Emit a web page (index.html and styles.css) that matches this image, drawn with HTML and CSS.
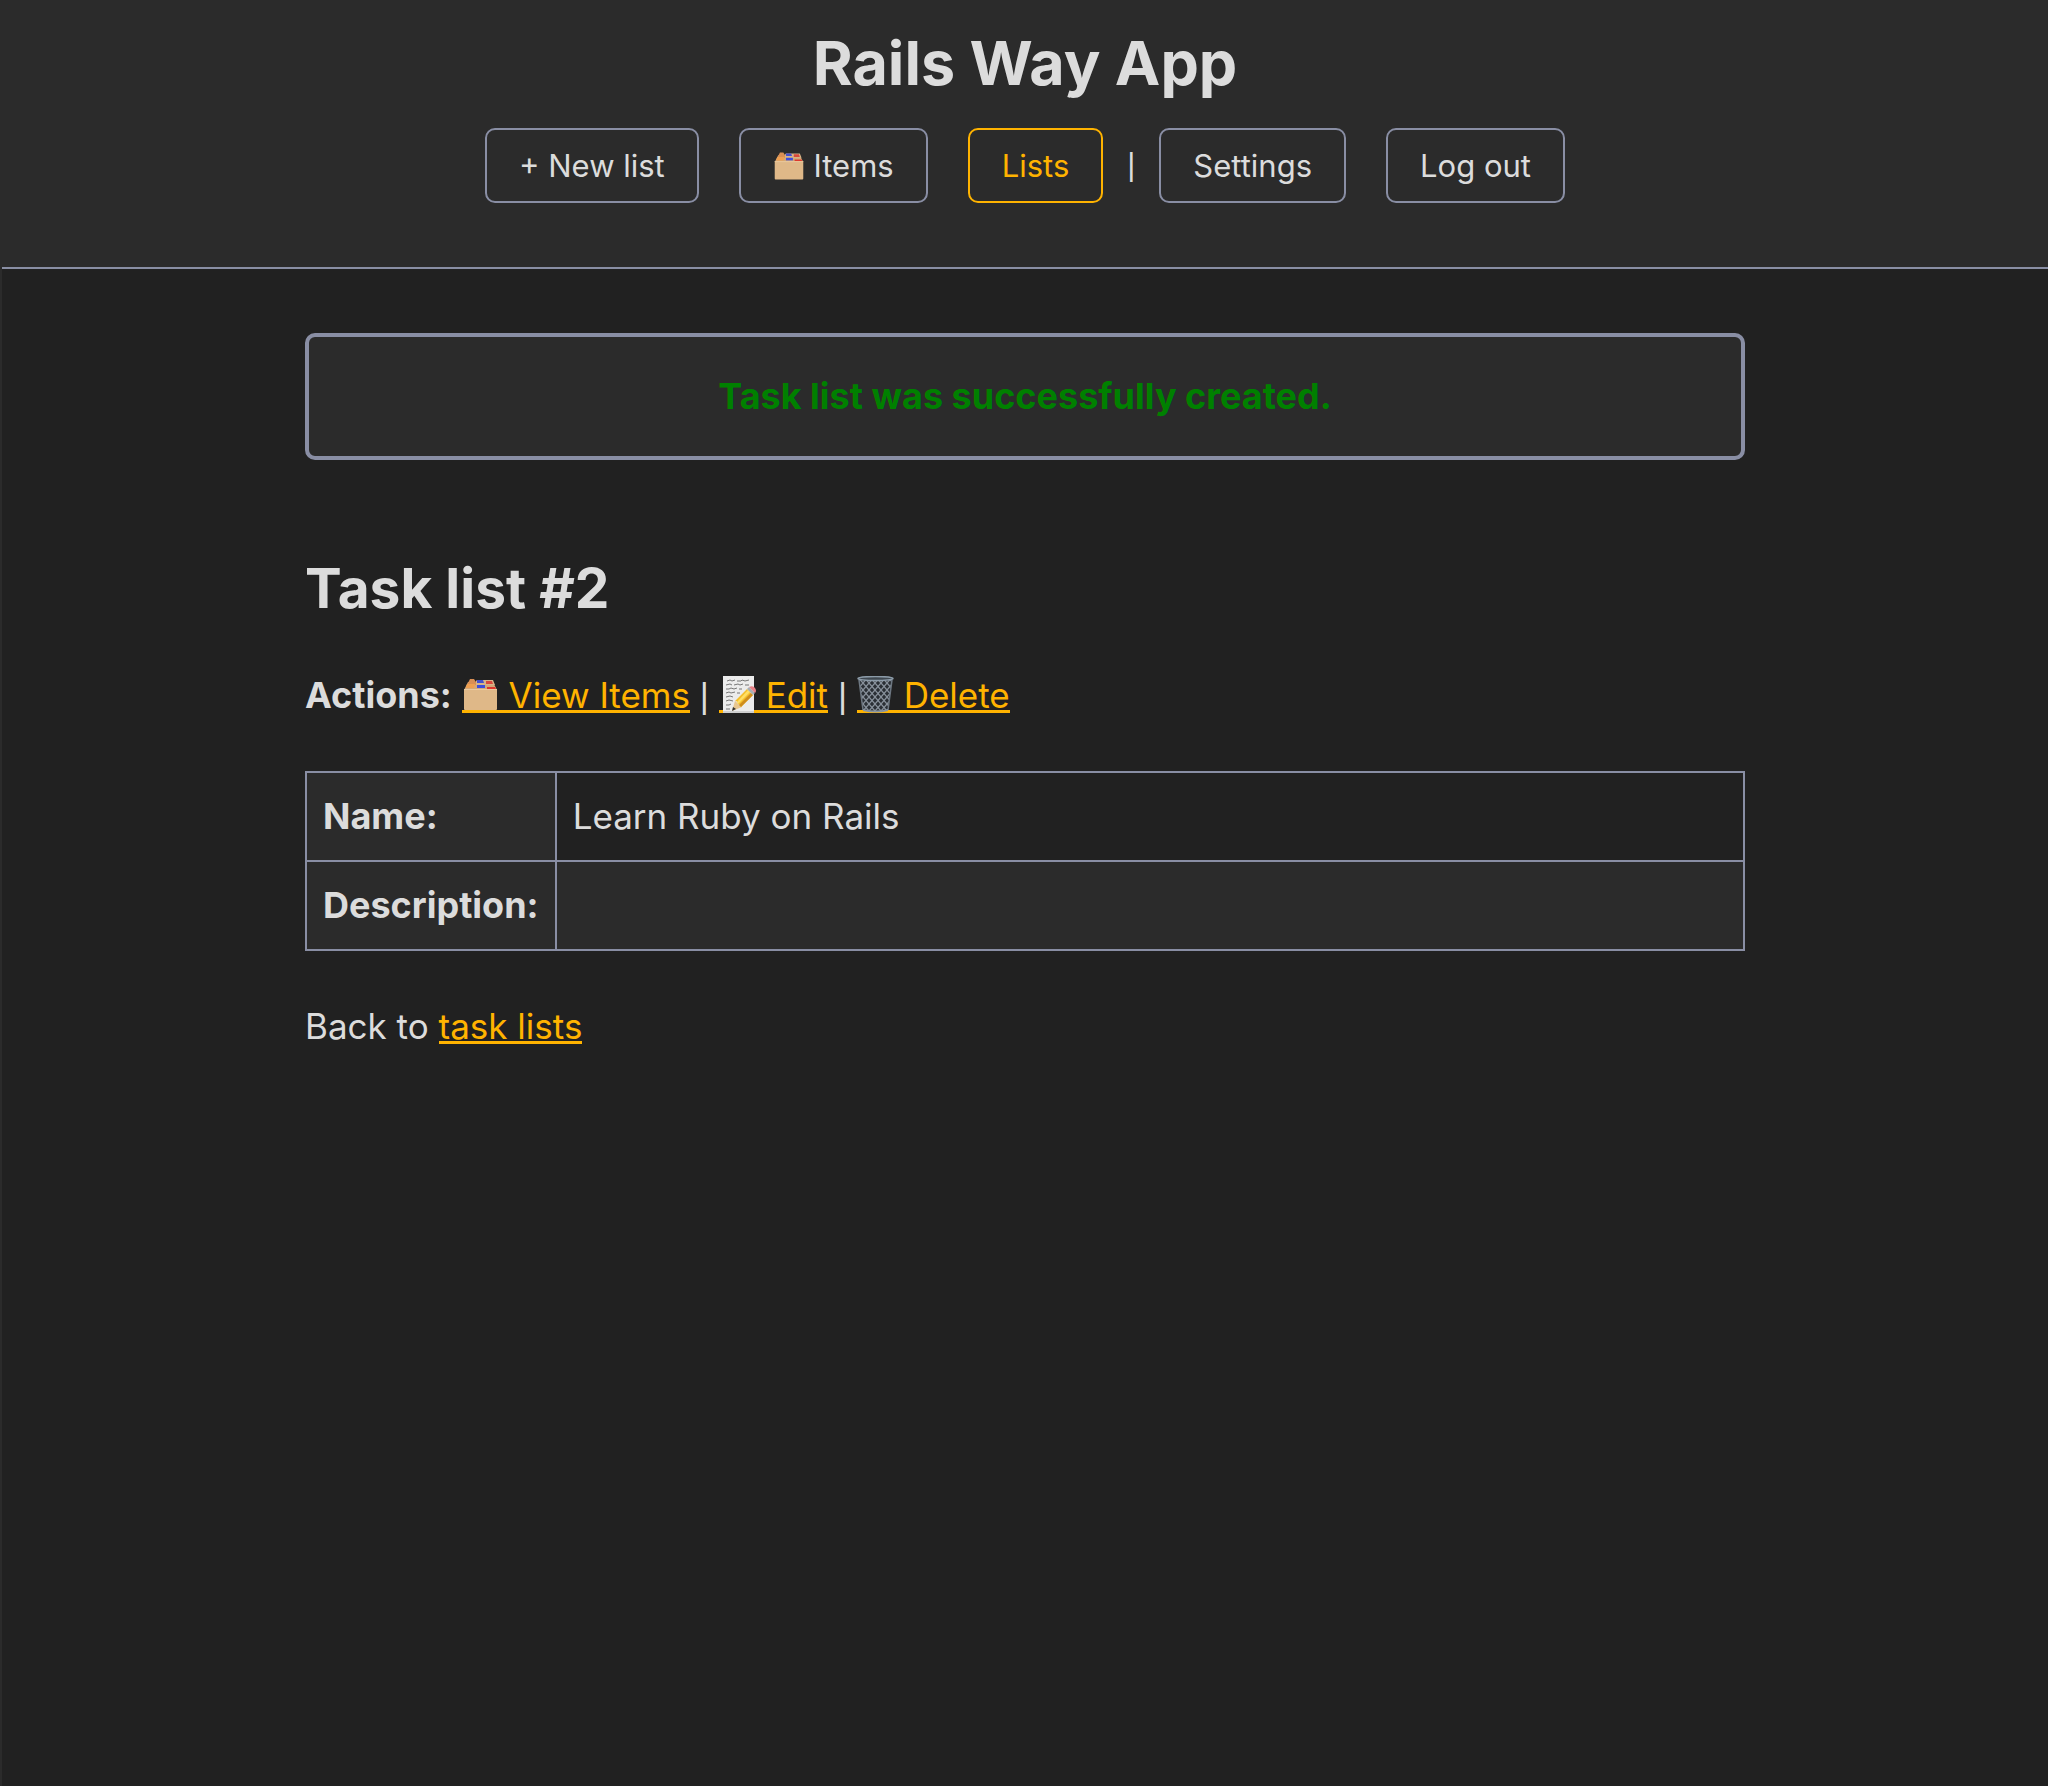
FILE: index.html
```html
<!DOCTYPE html>
<html lang="en">
<head>
<meta charset="utf-8">
<meta name="viewport" content="width=device-width, initial-scale=1">
<title>Rails Way App</title>
<link rel="stylesheet" href="styles.css">
</head>
<body>
<svg class="sprite" aria-hidden="true">
  <defs>
    <pattern id="mesh" width="6" height="7" patternUnits="userSpaceOnUse">
      <path d="M0 0l6 7M6 0L0 7" stroke="#87909a" stroke-width="1.3"/>
    </pattern>
  </defs>
  <symbol id="icon-dividers" viewBox="0 0 37 37">
    <path d="M2 14 6 6h25l4 8z" fill="#d3a878"/>
    <path d="M6 7 8 3h4l2 3v3H6z" fill="#d98f55"/>
    <path d="M4 11l1-3h8l-1 4H4z" fill="#ef9f50"/>
    <path d="M14 5l1-1h16l2 5H14z" fill="#d8b488"/>
    <path d="M15 4h6l1 3h-7z" fill="#4350cf"/>
    <path d="M24 5h6l1 3h-7z" fill="#d9483c"/>
    <path d="M15 9h8v3h-8z" fill="#3d4ddb"/>
    <path d="M25 11h8l1 2h-9z" fill="#dd382d"/>
    <path d="M2 13h33v20q0 1-1 1H3q-1 0-1-1z" fill="#dfb888"/>
    <path d="M2 13h33v1H2z" fill="#ecca9f"/>
  </symbol>
  <symbol id="icon-memo" viewBox="0 0 37 37">
    <path d="M4 0h31v37H4z" fill="#ececec"/>
    <path d="M4 35h31v2H4z" fill="#cfcfcf"/>
    <path d="M8 5l3-1 2 1 3-1M18 5h4l1-1 3 1 4-1M7 9l4-1 2 1M15 9l4-1 2 1 3-1M7 13h3l2-1 3 1 3-1M20 13h3M7 17l3-1 2 1 4-1M7 21l4-1 3 1M7 25l3-1 4 1M7 29h3l2-1M7 33h4M26 9h4M18 17h3" fill="none" stroke="#777" stroke-width="1"/>
    <path d="M13 35l3-10 7 6z" fill="#e8c690"/>
    <path d="M13 35l1-4 3 2z" fill="#333"/>
    <path d="M16 25 28 13l6 6-12 12q-1-3-3-3 0-3-3-3z" fill="#f5bf2c"/>
    <path d="M18 26 29 14l2 2-12 12z" fill="#ffdf66"/>
    <path d="M20 29 32 17l2 2-12 12z" fill="#cf8d1d"/>
    <path d="M28 13l2-2 6 6-2 2z" fill="#a9b0b5"/>
    <path d="M30 11q4-2 6 1 2 3 0 5z" fill="#e98288"/>
  </symbol>
  <symbol id="icon-bin" viewBox="0 0 37 37">
    <path d="M2 3h33l-4 31q-12 4-25 0z" fill="#2a2f35"/>
    <path d="M2 3h33l-4 31q-12 4-25 0z" fill="url(#mesh)"/>
    <path d="M2 4l4 30M35 4l-4 30" stroke="#6c7680" stroke-width="1.5"/>
    <ellipse cx="18.500" cy="2.500" rx="17.500" ry="2" fill="#3f4850" stroke="#8c9ba8" stroke-width="1.500"/>
    <path d="M6 33q12 3 25 0v2q-12 3-25 0z" fill="#8794a1"/>
  </symbol>
</svg>

<header class="site-header">
  <h1 class="site-title">Rails Way App</h1>
  <nav class="site-nav">
    <a class="nav-button" href="#new">+ New list</a>
    <a class="nav-button" href="#items"><svg class="nav-icon" aria-hidden="true"><use href="#icon-dividers"/></svg> Items</a>
    <a class="nav-button nav-button-current" href="#lists" aria-current="page">Lists</a>
    <span class="nav-divider divider">|</span>
    <a class="nav-button" href="#settings">Settings</a>
    <button class="nav-button" type="button">Log out</button>
  </nav>
</header>

<main class="content">
  <p class="notice" role="status">Task list was successfully created.</p>
  <h2 class="page-title">Task list #2</h2>
  <p class="row"><strong class="label">Actions:</strong> <a class="link" href="#view"><svg class="link-icon" aria-hidden="true"><use href="#icon-dividers"/></svg> View Items</a> <span class="divider">|</span> <a class="link" href="#edit"><svg class="link-icon" aria-hidden="true"><use href="#icon-memo"/></svg> Edit</a> <span class="divider">|</span> <a class="link" href="#delete"><svg class="link-icon" aria-hidden="true"><use href="#icon-bin"/></svg> Delete</a></p>
  <table class="details">
    <tr><th scope="row">Name:</th><td>Learn Ruby on Rails</td></tr>
    <tr><th scope="row">Description:</th><td></td></tr>
  </table>
  <p class="row">Back to <a class="link" href="#lists">task lists</a></p>
</main>
</body>
</html>
```

FILE: styles.css
```css
:root {
  --bg: #212121;
  --panel: #2b2b2b;
  --border: #898ea4;
  --text: #dcdcdc;
  --accent: #ffb300;
}

* {
  box-sizing: border-box;
}

html {
  min-height: 100%;
  background: var(--bg);
  border-left: 2px solid var(--panel);
}

body {
  margin: 0;
  color: var(--text);
  font-family: Inter, "Liberation Sans", sans-serif;
  font-size: 35px;
  line-height: 55px;
}

/* Kept in the page so that its pattern stays available to the icons. */
.sprite {
  position: absolute;
  width: 0;
  height: 0;
}

.site-header {
  padding: 26px 32px 64px;
  background: var(--panel);
  border-bottom: 2px solid var(--border);
  text-align: center;
}

.site-title {
  margin: 0 0 28px;
  font-size: 61px;
  font-weight: 700;
  line-height: 74px;
}

.site-nav {
  display: flex;
  flex-wrap: wrap;
  justify-content: center;
  gap: 40px;
  font-size: 31px;
  line-height: 39px;
}

.nav-button {
  padding: 16px 32px;
  border: 2px solid var(--border);
  border-radius: 10px;
  background: none;
  color: var(--text);
  font: inherit;
  text-decoration: none;
}

.nav-button-current {
  border-color: var(--accent);
  color: var(--accent);
}

.divider {
  font-family: "Liberation Sans", sans-serif;
  line-height: 30px;
}

.nav-divider {
  margin: 0 -16px;
  padding: 22px 0;
}

.nav-icon {
  width: 32px;
  height: 32px;
  margin: -4px 0 -5px;
}

.content {
  width: 90%;
  max-width: 1440px;
  margin: 64px auto;
}

.notice {
  margin: 0 0 96px;
  padding: 32px;
  border: 4px solid var(--border);
  border-radius: 10px;
  background: var(--panel);
  color: #008000;
  font-size: 36px;
  font-weight: 700;
  text-align: center;
}

.page-title {
  margin: 0 0 47px;
  font-size: 55px;
  font-weight: 700;
  line-height: 65px;
}

.row {
  margin: 0;
}

.label {
  font-size: 36px;
}

.link {
  display: inline-block;
  border-bottom: 3px solid var(--accent);
  color: var(--accent);
  line-height: 30px;
  text-decoration: none;
}

.link-icon {
  width: 37px;
  height: 37px;
  margin: -10px 0 -5px;
}

.details {
  width: 100%;
  margin: 48px 0;
  border-collapse: collapse;
}

.details th,
.details td {
  height: 89px;
  padding: 16px;
  border: 2px solid var(--border);
  text-align: left;
}

.details th {
  width: 1px;
  background: var(--panel);
  font-size: 36px;
  font-weight: 700;
}

.details tr:nth-child(even) {
  background: var(--panel);
}
```
